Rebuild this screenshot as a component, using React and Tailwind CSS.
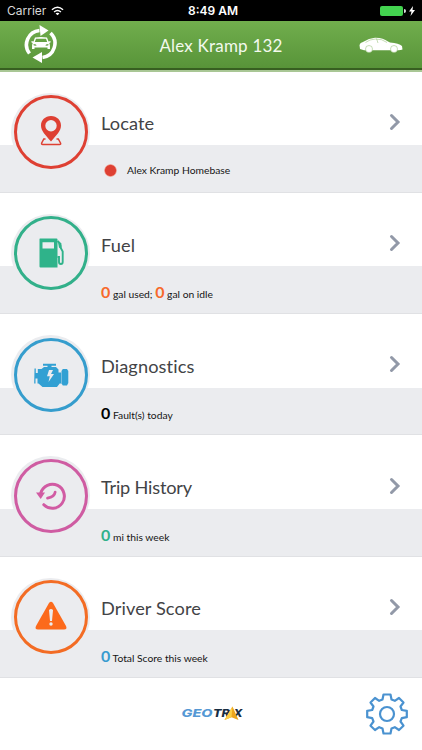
const LocateIcon = () => (
  <svg viewBox="0 0 40 40" className="w-10 h-10" fill="none">
    <path d="M14.500 27 L12.800 27 L10.700 31 Q10.200 32.600 11.700 32.600 H28.500 Q30.200 32.600 29.500 31 L27.300 27 H25.500" stroke="#de4033" strokeWidth="1.500" />
    <path fillRule="evenodd" fill="#de4033" d="M20 4 C14 4 10 8.300 10 13.500 C10 19 14.500 23 20 29.500 C25.500 23 30 19 30 13.500 C30 8.300 26 4 20 4 Z M20 8 A5.700 5.700 0 1 1 20 19.400 A5.700 5.700 0 1 1 20 8 Z" />
  </svg>
);

const FuelIcon = () => (
  <svg viewBox="0 0 40 40" className="w-10 h-10" fill="none">
    <path fillRule="evenodd" fill="#2fb38a" d="M8.500 6 Q8.500 5.500 9 5.500 H25.500 Q26.500 5.500 26.500 6.500 V34.500 H9.500 Q8.500 34.500 8.500 33.500 Z M11.500 9.300 V15.500 H23 V9.300 Z" />
    <path d="M26.500 8 L29.500 11 V14.500 L31.700 18.500 V29 Q31.700 31 29.900 31 Q28 31 28 29 V24 H26.500" stroke="#2fb38a" strokeWidth="1.900" />
    <path d="M27 9.500 L30.500 12.500 V16 L28 14.500 Z" fill="#2fb38a" />
  </svg>
);

const EngineIcon = () => (
  <svg viewBox="0 0 40 40" className="w-10 h-10" fill="#32a0d3">
    <g transform="translate(0.500 2)">
      <path d="M3 11.500 h1.300 v4.500 h2 v-4 h3.700 l2.500 -2 h3.500 v-1.300 h-4.500 v-2 h13 v2 h-4.500 v1.300 h4.500 l2.500 2.500 v3 h2.700 v11 h-1.500 l-2.700 3.500 h-14.500 l-4 -3.500 h-1 v-5 h-2 v5 h-1.300 z" />
      <path d="M30 14 l1.300 -2 h4.200 l1.300 2 v12 l-1.300 2.500 h-4.200 l-1.300 -2 z" />
      <path d="M17.500 13 h4 l-2 4 h3 l-5.500 8 l1.300 -5.700 h-2.800 z" fill="#ebecef" />
    </g>
  </svg>
);

const HistoryIcon = () => (
  <svg viewBox="0 0 40 40" className="w-10 h-10" fill="none">
    <path d="M9.800 17 A12 12 0 1 1 12.800 28.700" stroke="#d15ba3" strokeWidth="3" strokeLinecap="round" />
    <path d="M5 16.500 h9 l-4.300 6.500 z" fill="#d15ba3" />
    <path d="M16.500 22.200 Q23.500 21 24.200 16" stroke="#d15ba3" strokeWidth="2.700" strokeLinecap="round" />
  </svg>
);

const WarningIcon = () => (
  <svg viewBox="0 0 40 40" className="w-10 h-10">
    <path d="M18 6 Q20 3.500 22 6 L35 29 Q36.500 32.500 33 32.500 H7 Q3.500 32.500 5 29 Z" fill="#fc6a1c" />
    <path d="M18 13 Q20 11 22 13 L21 24 H19 Z" fill="#ebecef" />
    <circle cx="20" cy="27" r="1.700" fill="#ebecef" />
  </svg>
);

const SyncCarLogo = () => (
  <svg viewBox="0 0 34 40" className="w-[34px] h-10 -mt-px" fill="none">
    <path d="M5.500 29.500 A14.300 14.300 0 0 1 15.500 6.500" stroke="#fff" strokeWidth="3.600" />
    <path d="M15.500 1 L24.500 6.500 L16.500 12 Z" fill="#fff" />
    <path d="M26.500 9 A14.300 14.300 0 0 1 18.500 33.500" stroke="#fff" strokeWidth="3.600" />
    <path d="M18 28 V39 L8.500 33.500 Z" fill="#fff" />
    <path
      fill="#fff"
      fillRule="evenodd"
      d="M11 13.500 Q17 12.500 23 13.500 L24.500 17.500 L26.500 17 V18.500 L25.300 19 Q26.300 20.500 26 25 H23.500 V23.500 H10.500 V25 H8 Q7.700 20.500 8.700 19 L7.500 18.500 V17 L9.500 17.500 Z M12 14.800 L10.800 18 H23.200 L22 14.800 Z M9.500 20 L9.800 21.500 L12.500 21.700 L12 20.500 Z M24.500 20 L22 20.500 L21.500 21.700 L24.200 21.500 Z"
    />
  </svg>
);

const SedanIcon = () => (
  <svg viewBox="0 0 44 16" className="w-11 h-4 mt-0.5" fill="#fff">
    <path d="M0.500 8 Q1 5.500 4 5 Q10 1 16 0.700 Q24 0.500 29 4.500 L31 5.500 Q40 6.300 43 9 L43.500 12.500 Q42 13.300 39.500 13.300 H5 L1 12 Z" />
    <path d="M6.500 5.500 Q10.500 2.300 16.500 2 Q23 1.700 28 5.500 M17.500 1.500 L19 6" fill="none" stroke="#8dbb6c" strokeWidth="0.500" />
    <circle cx="10" cy="12" r="3.500" stroke="#8dbb6c" strokeWidth="0.500" />
    <circle cx="35" cy="12" r="3.500" stroke="#8dbb6c" strokeWidth="0.500" />
  </svg>
);

const WifiIcon = () => (
  <svg viewBox="0 0 14 10" className="w-[13px] h-[10px]" fill="none" stroke="#fff" strokeWidth="1.500">
    <path d="M1 3.600 Q7 -1.600 13 3.600" />
    <path d="M3.300 6 Q7 2.900 10.700 6" />
    <path d="M7 9.700 L4.900 7.600 Q7 6 9.100 7.600 Z" fill="#fff" stroke="none" />
  </svg>
);

const GearIcon = () => (
  <svg viewBox="0 0 42 42" className="w-[42px] h-[42px]" fill="none" stroke="#4a92d0" strokeWidth="2.200" strokeLinejoin="round">
    <path d="M17.500 1.500 H24.500 L25.500 6.500 L28.800 7.800 L33 5 L37.500 9.500 L34.500 13.500 L35.800 17 L40.800 17.800 V24.200 L35.800 25.200 L34.500 28.500 L37.500 32.700 L33 37 L28.800 34.200 L25.500 35.500 L24.500 40.500 H17.500 L16.500 35.500 L13.200 34.200 L9 37 L4.500 32.700 L7.500 28.500 L6.200 25.200 L1.200 24.200 V17.800 L6.200 17 L7.500 13.500 L4.500 9.500 L9 5 L13.200 7.800 L16.500 6.500 Z" />
    <circle cx="21" cy="21" r="7" />
  </svg>
);

const GeotraxLogo = () => (
  <svg viewBox="0 0 64 18" className="w-16 h-[18px] -mt-0.5" fontFamily="Inter, sans-serif" fontSize="10.5" fontWeight="800" fontStyle="italic">
    <text x="1.500" y="13" textLength="31" lengthAdjust="spacingAndGlyphs" fill="#5598d4">GEO</text>
    <text x="33" y="13" textLength="17" lengthAdjust="spacingAndGlyphs" fill="#172d42">TR</text>
    <text x="53.500" y="13" textLength="9" lengthAdjust="spacingAndGlyphs" fill="#172d42">X</text>
    <path d="M52.500 2.500 L58.500 16 L51.500 13.200 L44.500 16 Z" fill="#eda41b" />
    <path d="M52.500 2.500 L51.500 13.200 L44.500 16 Z" fill="#fdce45" />
  </svg>
);

const MENU = [
  {
    title: 'Locate',
    tracking: 'tracking-[0.1px]',
    icon: <LocateIcon />,
    ring: 'border-[#de4033]',
    detail: (
      <>
        <span className="w-[13px] h-[13px] rounded-full bg-radial from-[#de4033] from-55% to-[#ebecef] to-75% ml-[3px] mr-[10px]"></span>
        <span>Alex Kramp Homebase</span>
      </>
    ),
  },
  {
    title: 'Fuel',
    tracking: 'tracking-[0.1px]',
    icon: <FuelIcon />,
    ring: 'border-[#32b08a]',
    detail: (
      <p>
        <b className="text-[16px] font-bold text-[#f7692b]">0</b> gal used; <b className="text-[16px] font-bold text-[#f7692b]">0</b> gal on idle
      </p>
    ),
  },
  {
    title: 'Diagnostics',
    tracking: 'tracking-[0.1px]',
    icon: <EngineIcon />,
    ring: 'border-[#359dcd]',
    detail: (
      <p>
        <b className="text-[16px] font-bold text-black">0</b> Fault(s) today
      </p>
    ),
  },
  {
    title: 'Trip History',
    tracking: 'tracking-[-0.2px]',
    icon: <HistoryIcon />,
    ring: 'border-[#cf5ca2]',
    detail: (
      <p>
        <b className="text-[16px] font-bold text-[#30b18a]">0</b> mi this week
      </p>
    ),
  },
  {
    title: 'Driver Score',
    tracking: 'tracking-[0.1px]',
    icon: <WarningIcon />,
    ring: 'border-[#f36c24]',
    detail: (
      <p>
        <b className="text-[16px] font-bold text-[#389bcf]">0</b> Total Score this week
      </p>
    ),
  },
];

const MenuRow = ({ item }) => (
  <div className="relative h-[121.3px] flex flex-col">
    <div className="h-[73.5px] pl-[101px] pr-[21px] flex items-center justify-between bg-white">
      <h2 className={`text-[18.2px] leading-6 pt-[30px] text-[#424346] ${item.tracking}`}>{item.title}</h2>
      <svg viewBox="0 0 12 18" className="w-3 h-[18px] mt-[27px]" fill="none" stroke="#9299a8" strokeWidth="3">
        <path d="M2.500 2.500 L9 9 L2.500 15.500" strokeLinecap="round" />
      </svg>
    </div>
    <div className="h-[47.8px] pl-[101px] pt-[5px] flex items-center bg-[#ebecef] border-b border-[#e0e1e4] text-[10.3px] text-[#151515] whitespace-nowrap">
      {item.detail}
    </div>
    <div className="absolute left-[11px] top-[21px] w-[79px] h-[79px] rounded-full bg-[#ebecef] p-[2.5px]">
      <div className={`w-full h-full rounded-full border-3 flex items-center justify-center ${item.ring}`}>{item.icon}</div>
    </div>
  </div>
);

const App = () => {
  return (
    <div className="w-full h-[750px] overflow-hidden flex flex-col bg-white font-['Lato',sans-serif]">
      <div className="h-[21px] shrink-0 bg-black text-white grid grid-cols-3 items-center px-[7px] text-[12px] font-['Inter',sans-serif]">
        <div className="flex items-center gap-[5px] text-[#d9d9d9]">
          <span>Carrier</span>
          <WifiIcon />
        </div>
        <span className="text-center font-semibold pl-1">8:49 AM</span>
        <div className="flex items-center justify-end">
          <span className="w-[23px] h-[10px] rounded-[2px] bg-[#43d34f]"></span>
          <span className="w-[2px] h-1 bg-[#ddd] rounded-r-sm ml-px mr-[3px]"></span>
          <svg viewBox="0 0 6 10" className="w-[6px] h-[10px]" fill="#fff">
            <path d="M4 0 L0 5.500 H2.500 L1.500 10 L6 4 H3.500 Z" />
          </svg>
        </div>
      </div>
      <header className="h-[50.5px] shrink-0 border-b-2 border-[#a9c795] flex">
        <div className="w-full border-b-2 border-[#375f21] bg-linear-to-b from-[#71ae4d] to-[#589439] flex items-center justify-between pl-6 pr-[19px]">
          <SyncCarLogo />
          <h1 className="text-[17px] text-[#f3f9ed] tracking-[0.2px] pl-[25px] pt-0.5">Alex Kramp 132</h1>
          <SedanIcon />
        </div>
      </header>
      <main className="shrink-0">
        {MENU.map((item) => (
          <MenuRow key={item.title} item={item} />
        ))}
      </main>
      <footer className="grow flex items-center justify-between pl-[180px] pr-[14px]">
        <GeotraxLogo />
        <GearIcon />
      </footer>
    </div>
  );
};

export default App;
